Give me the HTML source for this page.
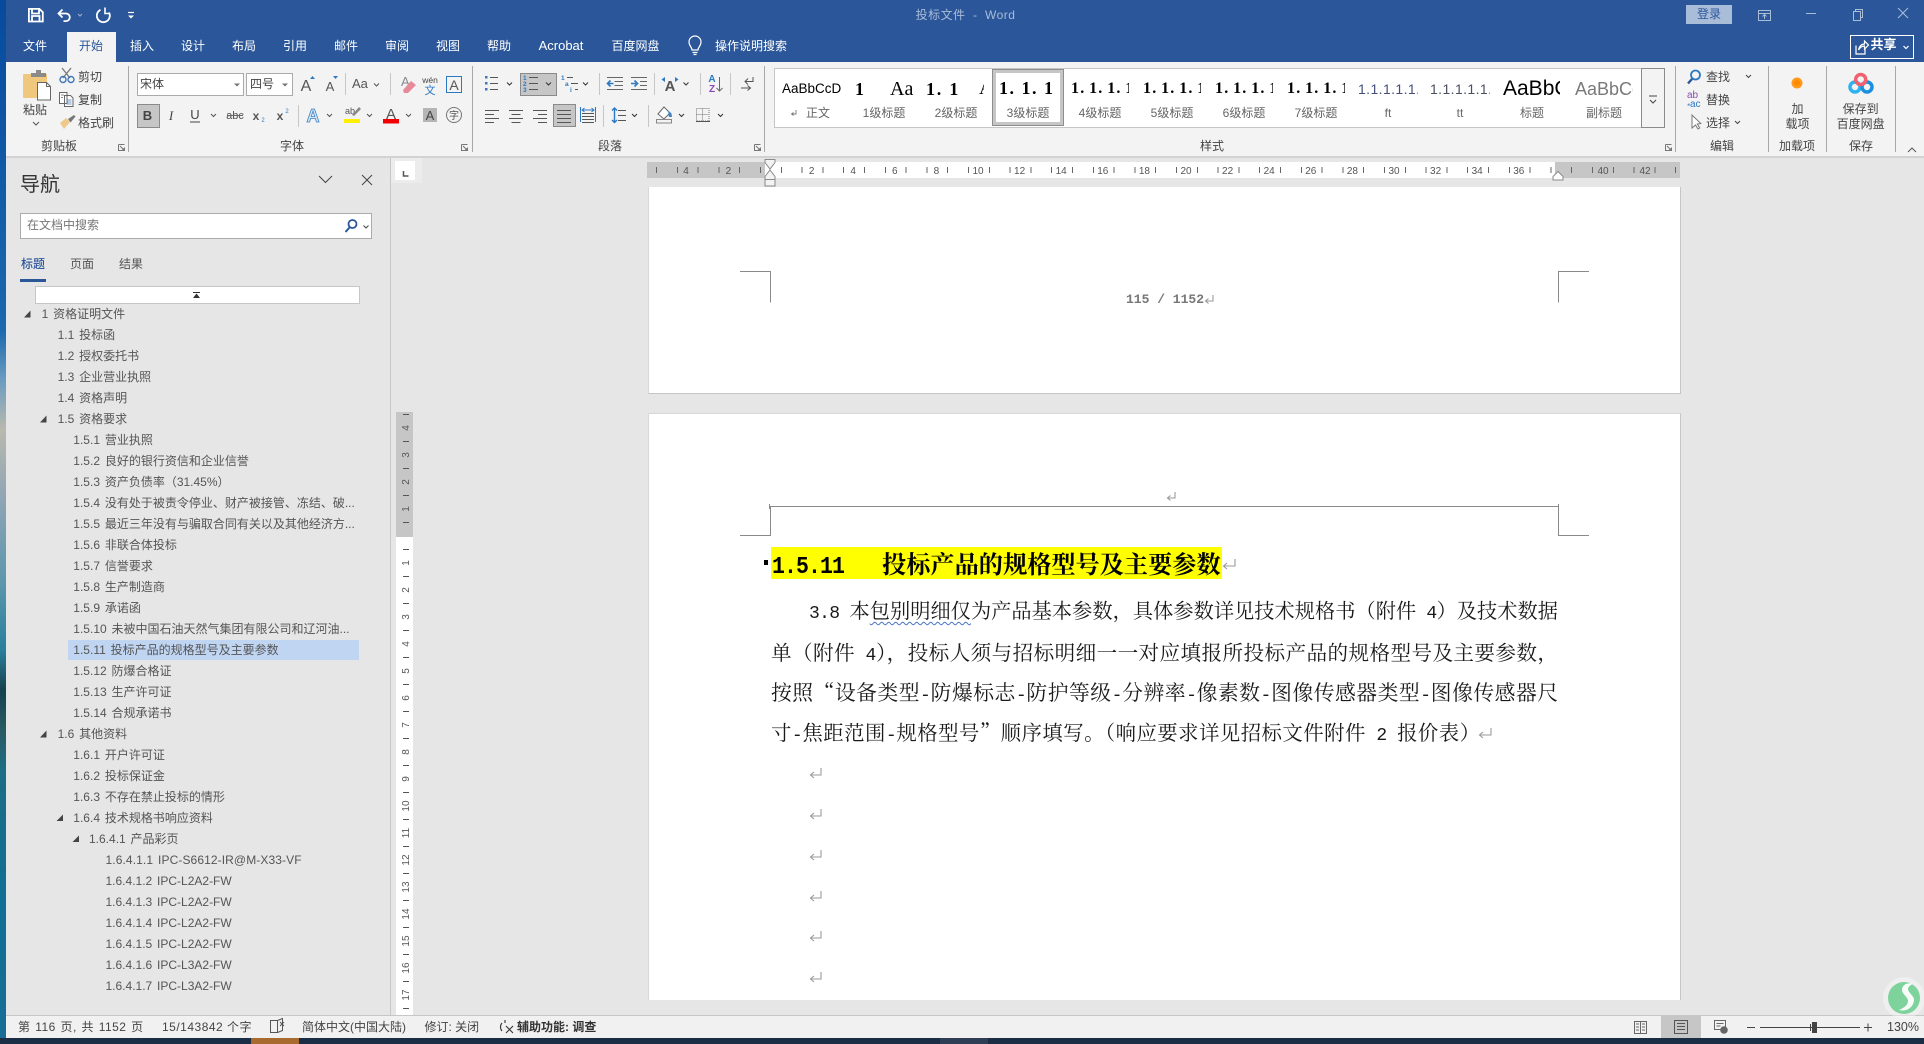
<!DOCTYPE html>
<html lang="zh-CN"><head><meta charset="utf-8"><title>投标文件 - Word</title>
<style>
html,body{margin:0;padding:0;width:1924px;height:1044px;overflow:hidden;background:#e6e6e6}
body{position:relative;font-family:"Liberation Sans","Noto Sans CJK SC",sans-serif;font-size:12px;color:#444}
.b{position:absolute}
.t{position:absolute;white-space:nowrap;line-height:20px;height:20px}
.c{transform:translateX(-50%)}
.tab{position:absolute;top:36px;line-height:20px;color:#fff;transform:translateX(-50%);white-space:nowrap}
.lb{position:absolute;top:136px;line-height:20px;color:#444;transform:translateX(-50%);white-space:nowrap}
.sl{position:absolute;top:103px;line-height:20px;color:#666;transform:translateX(-50%);white-space:nowrap}
.sp{position:absolute;overflow:hidden;white-space:nowrap;height:24px;line-height:24px;top:77px;color:#000;font-family:"Liberation Serif","Noto Serif CJK SC",serif}
#tree{position:absolute;left:6px;top:304px;width:384px;color:#555;font-size:12px;word-spacing:1.5px}
#tree div{height:21px;line-height:21px;white-space:nowrap}
.l1{padding-left:35.6px}.l2{padding-left:51.6px}.l3{padding-left:67.3px}.l4{padding-left:83px}.l5{padding-left:99.5px}
.body{position:absolute;font-family:"Noto Serif CJK SC",serif;color:#1a1a1a;height:30px;line-height:30px;font-size:20.6px;text-align:justify;text-align-last:justify;overflow:visible}
.m{font-family:"Liberation Mono",monospace;font-size:18px;letter-spacing:-.7px}
.st{position:absolute;top:1017px;line-height:20px;color:#444;white-space:nowrap;font-size:12px}
</style></head><body>
<div class="b" style="left:0;top:0;width:6px;height:1044px;background:linear-gradient(180deg,#084a9c 0,#0f58a6 150px,#1a68ae 330px,#6a9cc0 380px,#b8b9ae 430px,#8fa4b5 500px,#5d97ad 580px,#2a7f9c 650px,#16414f 690px,#2a5a63 730px,#1d6d85 770px,#0f6f94 900px,#186d95 1030px)"></div>
<div class="b" style="left:6px;top:0;width:1918px;height:62px;background:#2b579a"></div>
<div class="b" style="left:67px;top:32px;width:49px;height:30px;background:#f3f3f3"></div>
<div class="b" style="left:6px;top:62px;width:1918px;height:94px;background:#f3f3f3"></div>
<div class="b" style="left:6px;top:156px;width:1918px;height:2px;background:#d2d2d2"></div>

<div class="t c" style="left:965.500px;top:5px;color:#a9bcd8;letter-spacing:.45px">投标文件&nbsp; -&nbsp; Word</div>
<div class="b" style="left:1686px;top:5px;width:46px;height:19px;background:#a9bcd8;color:#2b579a;text-align:center;line-height:19px">登录</div>

<span class="tab" style="left:35px">文件</span><span class="tab" style="left:91px;color:#2b579a">开始</span><span class="tab" style="left:142px">插入</span><span class="tab" style="left:193px">设计</span><span class="tab" style="left:244px">布局</span><span class="tab" style="left:295px">引用</span><span class="tab" style="left:346px">邮件</span><span class="tab" style="left:397px">审阅</span><span class="tab" style="left:448px">视图</span><span class="tab" style="left:499px">帮助</span><span class="tab" style="left:561px;font-size:13px">Acrobat</span><span class="tab" style="left:635.500px">百度网盘</span><span class="tab" style="left:751px">操作说明搜索</span>
<div class="b" style="left:1850px;top:35px;width:62px;height:22px;border:1px solid #fff"></div>
<div class="t" style="left:1870.500px;top:35px;color:#fff;font-weight:700;font-size:13px">共享</div>

<!-- ribbon text -->
<div class="t c" style="left:35px;top:100px">粘贴</div>
<div class="t" style="left:78px;top:67px">剪切</div><div class="t" style="left:78px;top:90px">复制</div><div class="t" style="left:78px;top:113px">格式刷</div>
<span class="lb" style="left:59px">剪贴板</span><span class="lb" style="left:292px">字体</span><span class="lb" style="left:610px">段落</span><span class="lb" style="left:1212px">样式</span><span class="lb" style="left:1722px">编辑</span><span class="lb" style="left:1797px">加载项</span><span class="lb" style="left:1861px">保存</span>
<div class="b" style="left:137px;top:73px;width:105px;height:21px;background:#fff;border:1px solid #ababab;line-height:21px;text-indent:2px">宋体</div>
<div class="b" style="left:246px;top:73px;width:45px;height:21px;background:#fff;border:1px solid #ababab;line-height:21px;text-indent:3px">四号</div>
<div class="t" style="left:352px;top:74px;font-size:13px;color:#555">Aa</div>
<div class="b" style="left:137px;top:104px;width:21px;height:22px;background:#c6c6c6;border:1px solid #8a8a8a"></div>
<div class="b" style="left:520px;top:73px;width:35px;height:21px;background:#c6c6c6;border:1px solid #8a8a8a"></div>
<div class="b" style="left:553px;top:104px;width:21px;height:21px;background:#c6c6c6;border:1px solid #8a8a8a"></div>

<!-- style gallery -->
<div class="b" style="left:774px;top:68px;width:866px;height:58px;background:#fff;border:1px solid #c6c6c6"></div>
<div class="b" style="left:1641px;top:68px;width:22px;height:58px;background:#f3f3f3;border:1px solid #8a8a8a"></div>
<div class="b" style="left:992px;top:69px;width:70px;height:55px;border:1px solid #8e8e8e;box-shadow:inset 0 0 0 3px #c6c6c6;background:#fff"></div>
<div class="sp" style="left:782px;width:60px;font:13.500px/24px 'Liberation Sans',sans-serif">AaBbCcD</div>
<div class="sp" style="left:855px;width:10px;font-size:18px;font-weight:700">1</div>
<div class="sp" style="left:890px;width:26px;font-size:20px">Aa</div>
<div class="sp" style="left:926px;width:36px;font-size:18px;font-weight:700;letter-spacing:1.800px">1. 1</div>
<div class="sp" style="left:979px;width:5px;font-size:19px">A</div>
<div class="sp" style="left:999px;top:76px;width:56px;font-size:18px;font-weight:700;letter-spacing:1.500px">1. 1. 1</div>
<div class="sp" style="left:1071px;width:58px;font-size:16px;font-weight:700;letter-spacing:1.200px;word-spacing:-1.500px">1. 1. 1. 1</div>
<div class="sp" style="left:1143px;width:58px;font-size:16px;font-weight:700;letter-spacing:1.200px;word-spacing:-1.500px">1. 1. 1. 1</div>
<div class="sp" style="left:1215px;width:58px;font-size:16px;font-weight:700;letter-spacing:1.200px;word-spacing:-1.500px">1. 1. 1. 1</div>
<div class="sp" style="left:1287px;width:58px;font-size:16px;font-weight:700;letter-spacing:1.200px;word-spacing:-1.500px">1. 1. 1. 1</div>
<div class="sp" style="left:1358px;width:60px;font:14px/24px 'Liberation Sans',sans-serif;color:#44507a;letter-spacing:.4px">1.1.1.1.1.</div>
<div class="sp" style="left:1430px;width:60px;font:14px/24px 'Liberation Sans',sans-serif;color:#4a5060;letter-spacing:.4px">1.1.1.1.1.</div>
<div class="sp" style="left:1503px;width:57px;font:21px/24px 'Liberation Sans',sans-serif">AaBbC</div>
<div class="sp" style="left:1575px;width:58px;font:18px/24px 'Liberation Sans',sans-serif;color:#7a7a7a">AaBbCc</div>
<span class="sl" style="left:818px">正文</span><span class="sl" style="left:884px">1级标题</span><span class="sl" style="left:956px">2级标题</span><span class="sl" style="left:1028px">3级标题</span><span class="sl" style="left:1100px">4级标题</span><span class="sl" style="left:1172px">5级标题</span><span class="sl" style="left:1244px">6级标题</span><span class="sl" style="left:1316px">7级标题</span><span class="sl" style="left:1388px">ft</span><span class="sl" style="left:1460px">tt</span><span class="sl" style="left:1532px">标题</span><span class="sl" style="left:1604px">副标题</span>

<div class="t" style="left:1706px;top:67px">查找</div><div class="t" style="left:1706px;top:90px">替换</div><div class="t" style="left:1706px;top:113px">选择</div>
<div class="t c" style="left:1797.500px;top:99px">加</div><div class="t c" style="left:1797.500px;top:114px">载项</div>
<div class="t c" style="left:1860.700px;top:99px">保存到</div><div class="t c" style="left:1860.700px;top:114px">百度网盘</div>

<!-- nav pane -->
<div class="b" style="left:390px;top:158px;width:1px;height:858px;background:#c6c6c6"></div>
<div class="t" style="left:20px;top:172px;height:26px;line-height:26px;font-size:20px;color:#333">导航</div>
<div class="b" style="left:20px;top:213px;width:350px;height:24px;background:#fff;border:1px solid #ababab"></div>
<div class="t" style="left:27px;top:215px;color:#777">在文档中搜索</div>
<div class="t" style="left:21px;top:254px;color:#2b579a;font-weight:500">标题</div><div class="t" style="left:70px;top:254px;color:#555">页面</div><div class="t" style="left:119px;top:254px;color:#555">结果</div>
<div class="b" style="left:20px;top:279px;width:26px;height:3px;background:#2b579a"></div>
<div class="b" style="left:35px;top:286px;width:323px;height:16px;background:#fff;border:1px solid #c6c6c6"></div>
<div class="b" style="left:68px;top:640px;width:291px;height:20px;background:#c0d5f2"></div>
<div id="tree">
<div class="l1">1 资格证明文件</div>
<div class="l2">1.1 投标函</div>
<div class="l2">1.2 授权委托书</div>
<div class="l2">1.3 企业营业执照</div>
<div class="l2">1.4 资格声明</div>
<div class="l2">1.5 资格要求</div>
<div class="l3">1.5.1 营业执照</div>
<div class="l3">1.5.2 良好的银行资信和企业信誉</div>
<div class="l3">1.5.3 资产负债率（31.45%）</div>
<div class="l3">1.5.4 没有处于被责令停业、财产被接管、冻结、破...</div>
<div class="l3">1.5.5 最近三年没有与骗取合同有关以及其他经济方...</div>
<div class="l3">1.5.6 非联合体投标</div>
<div class="l3">1.5.7 信誉要求</div>
<div class="l3">1.5.8 生产制造商</div>
<div class="l3">1.5.9 承诺函</div>
<div class="l3">1.5.10 未被中国石油天然气集团有限公司和辽河油...</div>
<div class="l3">1.5.11 投标产品的规格型号及主要参数</div>
<div class="l3">1.5.12 防爆合格证</div>
<div class="l3">1.5.13 生产许可证</div>
<div class="l3">1.5.14 合规承诺书</div>
<div class="l2">1.6 其他资料</div>
<div class="l3">1.6.1 开户许可证</div>
<div class="l3">1.6.2 投标保证金</div>
<div class="l3">1.6.3 不存在禁止投标的情形</div>
<div class="l3">1.6.4 技术规格书响应资料</div>
<div class="l4">1.6.4.1 产品彩页</div>
<div class="l5" style="letter-spacing:.1px">1.6.4.1.1 IPC-S6612-IR@M-X33-VF</div>
<div class="l5">1.6.4.1.2 IPC-L2A2-FW</div>
<div class="l5">1.6.4.1.3 IPC-L2A2-FW</div>
<div class="l5">1.6.4.1.4 IPC-L2A2-FW</div>
<div class="l5">1.6.4.1.5 IPC-L2A2-FW</div>
<div class="l5">1.6.4.1.6 IPC-L3A2-FW</div>
<div class="l5">1.6.4.1.7 IPC-L3A2-FW</div>
</div>

<!-- rulers -->
<div class="b" style="left:391px;top:158px;width:31px;height:25px;background:#ececec"></div>
<div class="b" style="left:395px;top:161px;width:20px;height:19px;background:#fff"></div>
<div class="b" style="left:647px;top:162px;width:1033px;height:16px;background:#c6c6c6"></div>
<div class="b" style="left:765px;top:162px;width:790px;height:16px;background:#fff"></div>
<div class="b" style="left:647px;top:167px;width:1033px;height:6px;background:repeating-linear-gradient(90deg,#666 0,#666 1px,transparent 1px,transparent 20.8px);background-position:9px 0"></div>
<div class="b" style="left:396px;top:412px;width:17px;height:125px;background:#c6c6c6"></div>
<div class="b" style="left:396px;top:537px;width:17px;height:479px;background:#fff"></div>
<div class="b" style="left:403px;top:414px;width:6px;height:600px;background:repeating-linear-gradient(180deg,#555 0,#555 1px,transparent 1px,transparent 27px)"></div>

<!-- pages -->
<div class="b" style="left:648px;top:187px;width:1031px;height:206px;background:#fff;border-right:1px solid #c6c6c6;border-bottom:1px solid #c6c6c6;border-left:1px solid #d8d8d8"></div>
<div class="b" style="left:648px;top:413px;width:1031px;height:586px;background:#fff;border-right:1px solid #c6c6c6;border-left:1px solid #d8d8d8;border-top:1px solid #d8d8d8"></div>
<div class="t" style="left:1126px;top:290px;font-family:'Liberation Mono',monospace;font-weight:700;color:#777;font-size:13px">115 / 1152</div>
<div class="b" style="left:771px;top:547px;width:451px;height:32px;background:#ff0;line-height:31px;font-family:'Noto Serif CJK SC',serif;font-weight:700;font-size:24.200px;color:#000;white-space:nowrap"><span style="display:inline-block;width:111px;padding-left:1px;box-sizing:border-box"><span style="display:inline-block;font-family:'Liberation Mono',monospace;font-size:21.500px;letter-spacing:-.9px;transform:scaleY(1.120);transform-origin:50% 60%">1.5.11</span></span>投标产品的规格型号及主要参数</div>
<div class="b" style="left:764px;top:560px;width:4px;height:5px;background:#000"></div>
<div class="body" style="left:809px;top:595px;width:749px;font-size:20.200px"><span class="m">3.8 </span>本<span style="text-decoration:underline wavy #4472c4 1px;text-underline-offset:3px">包别明细仅</span>为产品基本参数，具体参数详见技术规格书（附件<span class="m"> 4</span>）及技术数据</div>
<div class="body" style="left:771px;top:636px;width:787px"><span>单（附件</span><span class="m"> 4</span>），投标人须与招标明细一一对应填报所投标产品的规格型号及主要参数，</div>
<div class="body" style="left:771px;top:676px;width:787px;font-size:20.800px">按照“设备类型<span class="m">-</span>防爆标志<span class="m">-</span>防护等级<span class="m">-</span>分辨率<span class="m">-</span>像素数<span class="m">-</span>图像传感器类型<span class="m">-</span>图像传感器尺</div>
<div class="body" style="left:771px;top:717px;width:709px;font-size:20.400px">寸<span class="m">-</span>焦距范围<span class="m">-</span>规格型号”顺序填写。（响应要求详见招标文件附件<span class="m"> 2 </span>报价表）</div>

<!-- status bar -->
<div class="b" style="left:6px;top:1015px;width:1918px;height:1px;background:#c6c6c6"></div>
<div class="b" style="left:6px;top:1016px;width:1918px;height:22px;background:#f1f1f1"></div>
<div class="b" style="left:0;top:1038px;width:1924px;height:6px;background:#1b2d45"></div>
<div class="b" style="left:251px;top:1038px;width:48px;height:6px;background:#a96a30"></div>
<div class="b" style="left:940px;top:1038px;width:48px;height:6px;background:#2e3f55"></div>
<div class="b" style="left:1661px;top:1016px;width:40px;height:22px;background:#c6c6c6"></div>
<span class="st" style="left:18px;letter-spacing:.45px;word-spacing:1px">第 116 页, 共 1152 页</span><span class="st" style="left:162px;letter-spacing:.5px">15/143842 个字</span><span class="st" style="left:302px">简体中文(中国大陆)</span><span class="st" style="left:424.500px">修订: 关闭</span><span class="st" style="left:517px;font-weight:700;color:#333">辅助功能: 调查</span><span class="st" style="left:1887px;color:#444;font-size:12.500px">130%</span>

<svg class="b" style="left:0;top:0" width="1924" height="1044" viewBox="0 0 1924 1044" fill="none" font-family="Liberation Sans, Noto Sans CJK SC, sans-serif">
<!-- QAT -->
<g stroke="#fff" stroke-width="1.800">
<path d="M28.900 8.900h10.500l3.400 3.400v9.200H28.900z"/><path d="M32 9v4.500h7V9M32 21.500v-5.500h7.500v5.500"/>
<path d="M59 13.500h7a3.800 3.800 0 0 1 0 7.600h-2.500"/><path d="M62.500 9.500l-4 4 4 4"/>
<path d="M100.500 9.800A6.500 6.500 0 1 0 109 12.500"/><path d="M105 7.500v6h5" stroke-width="1.600"/>
<path d="M128 12.500h6" stroke-width="1.200"/></g>
<path d="M128 15.500h6l-3 3z" fill="#fff"/><path d="M78 14l2 2 2-2" stroke="#9fb3d1"/>
<!-- window controls -->
<g stroke="#a9bcd8" stroke-width="1"><path d="M1758.500 10.500h12v10h-12zM1758.500 13.500h12M1764.500 19v-4.500M1762.500 16.500l2-2 2 2"/><path d="M1806 13.500h10"/><path d="M1853.500 11.500h7v9h-7zM1855.500 11.500v-2h7v8h-2"/><path d="M1898 8l10 10M1908 8l-10 10"/></g>
<!-- bulb -->
<g stroke="#fff" stroke-width="1.200"><path d="M692 50c0-3-3-4-3-8a6 6 0 0 1 12 0c0 4-3 5-3 8z"/><path d="M692.500 52.500h5M693.500 54.500h3"/></g>
<!-- share -->
<g stroke="#fff" stroke-width="1.200"><path d="M1856 45.500v8.500h9v-5"/><path d="M1858.500 50c1-4 3-6 6-6v-3l4 4-4 4v-3c-2.500 0-4.500 1.500-6 4z"/></g><path d="M1903.500 46l2.500 2.500 2.500-2.500" stroke="#fff" stroke-width="1.200"/>
<!-- separators -->
<path d="M128.500 66v86M472.500 66v86M764.500 66v86M1675.500 66v86M1768.500 66v86M1826.500 66v86M1895.500 66v86" stroke="#a8a8a8"/>
<path d="M345.500 73v22M390.500 73v22M298.500 105v22M599.500 73v22M654.500 73v22M700.500 73v22M730.500 73v22M603.500 105v22M648.500 105v22" stroke="#c6c6c6"/>
<!-- clipboard -->
<rect x="23" y="74" width="24" height="24" rx="1" fill="#efc77d"/><rect x="31" y="73" width="15" height="4" fill="#8a8a8a"/><rect x="36" y="70" width="5" height="4" fill="#8a8a8a"/>
<path d="M37.500 82.500h9l4 4v13.500h-13z" fill="#fff" stroke="#666"/><path d="M46.500 82.500v4h4" stroke="#666"/>
<path d="M33 122l3 3 3-3" stroke="#555"/>
<!-- scissors -->
<path d="M62 68l8 10M71 68l-8 10" stroke="#777" stroke-width="1.300"/><circle cx="63" cy="79.500" r="3" stroke="#3f78b8" stroke-width="1.400"/><circle cx="71" cy="79.500" r="3" stroke="#3f78b8" stroke-width="1.400"/>
<!-- copy -->
<path d="M59.500 92.500h7.500v11h-7.500zM64.500 95.500h6l2.500 2.500v8.500h-8.500z" fill="#fff" stroke="#666"/><path d="M66.500 100h5M66.500 102h5M66.500 104h5" stroke="#3f78b8" stroke-width=".8"/><path d="M61 95h3M61 97.500h2" stroke="#666" stroke-width=".8"/>
<!-- brush -->
<path d="M60 123l6-5 4 4-6 7z" fill="#eec98a"/><path d="M68 119l6-4 1.500 1.500-5 6z" fill="#777"/>
<!-- combo arrows -->
<path d="M234 83.500h6l-3 3z M282 83.500h6l-3 3z" fill="#777"/>
<!-- font row 1 -->
<text x="306" y="91" text-anchor="middle" font-size="16" fill="#555">A</text><path d="M310 79h5l-2.500-3z" fill="#2b79c2"/>
<text x="330" y="91" text-anchor="middle" font-size="13" fill="#555">A</text><path d="M333 76h5l-2.500 3z" fill="#2b79c2"/>
<path d="M374 83.500l2.500 2.500 2.500-2.500" stroke="#555"/>
<text x="401" y="86" font-size="13" fill="#888">A</text><path d="M403 90l8-9 5 4-8 8h-4z" fill="#e8899a"/>
<text x="430" y="83" text-anchor="middle" font-size="8.500" fill="#444">wén</text><text x="430" y="94" text-anchor="middle" font-size="11" fill="#2b79c2">文</text>
<rect x="446.500" y="76.500" width="15" height="16" stroke="#2b79c2"/><text x="454" y="90" text-anchor="middle" font-size="14" fill="#555">A</text>
<!-- font row 2 -->
<text x="147.500" y="120" text-anchor="middle" font-size="13" font-weight="700" fill="#444">B</text>
<text x="171" y="120" text-anchor="middle" font-size="13" font-style="italic" font-family="Liberation Serif,serif" fill="#444">I</text>
<text x="195" y="119" text-anchor="middle" font-size="13" fill="#444">U</text><path d="M190 122h10" stroke="#444"/>
<path d="M211 114l2.500 2.500 2.500-2.500M327 114l2.500 2.500 2.500-2.500M367 114l2.500 2.500 2.500-2.500M406 114l2.500 2.500 2.500-2.500" stroke="#555"/>
<text x="235" y="119" text-anchor="middle" font-size="11" fill="#555">abc</text><path d="M227 115.500h16" stroke="#666"/>
<text x="256" y="120" text-anchor="middle" font-size="12" font-weight="700" fill="#555">x</text><text x="263" y="122" text-anchor="middle" font-size="6" fill="#2b79c2">2</text>
<text x="280" y="120" text-anchor="middle" font-size="12" font-weight="700" fill="#555">x</text><text x="287" y="113" text-anchor="middle" font-size="6" fill="#2b79c2">2</text>
<text x="313" y="122" text-anchor="middle" font-size="18" font-weight="700" fill="#d5e6f7" stroke="#3f84c7" stroke-width=".8">A</text>
<text x="350" y="114" text-anchor="middle" font-size="9" fill="#555">ab</text><path d="M352 115l7-8 2 2-7 7z" fill="#8a8a8a"/><rect x="344" y="119" width="16" height="4" fill="#ffef00"/>
<text x="391" y="119" text-anchor="middle" font-size="15" fill="#555">A</text><rect x="383" y="119" width="16" height="4.500" fill="#f00000"/>
<rect x="423" y="108" width="14" height="14" fill="#b5b5b5"/><text x="430" y="120" text-anchor="middle" font-size="13" fill="#444">A</text>
<circle cx="454" cy="115" r="7.500" stroke="#777"/><text x="454" y="119" text-anchor="middle" font-size="10" fill="#555">字</text>
<!-- paragraph row 1 -->
<g fill="#3f78b8"><rect x="485" y="76" width="2.500" height="2.500"/><rect x="485" y="82" width="2.500" height="2.500"/><rect x="485" y="88" width="2.500" height="2.500"/></g>
<path d="M490 77.500h8M490 83.500h8M490 89.500h8M529 77.500h9M529 83.500h9M529 89.500h9M567 77.500h6M571 83.500h7M575 89.500h3" stroke="#555"/>
<path d="M607 77.500h16M614.500 81.500h8.500M614.500 85.500h8.500M607 89.500h16M631 77.500h16M640 81.500h7M640 85.500h7M631 89.500h16" stroke="#666"/>
<g font-size="6.500" font-weight="700" fill="#2b79c2"><text x="523" y="80">1</text><text x="523" y="86">2</text><text x="523" y="92">3</text><text x="561" y="80">1</text><text x="565" y="86">a</text><text x="570" y="92">i</text></g>
<path d="M507 82.500l2.500 2.500 2.500-2.500M546 82.500l2.500 2.500 2.500-2.500M583 82.500l2.500 2.500 2.500-2.500M683.500 82.500l2.500 2.500 2.500-2.500" stroke="#333"/>
<path d="M613.500 83.500h-5M610.500 80.500l-3 3 3 3M631 83.500h5M634.500 80.500l3 3-3 3" stroke="#2b79c2" stroke-width="1.600"/>
<text x="670" y="91" text-anchor="middle" font-size="15" font-weight="700" fill="#555">A</text><path d="M665 77l-3.500 2.500 3.500 2.500zM675 77l3.500 2.500-3.500 2.500z" fill="#2b79c2"/>
<text x="712" y="82" text-anchor="middle" font-size="10" font-weight="700" fill="#2b79c2">A</text><text x="712" y="92" text-anchor="middle" font-size="10" font-weight="700" fill="#8a4bb0">Z</text><path d="M719.500 77v14M716.500 88l3 3 3-3" stroke="#666"/>
<path d="M753 77v4.500h-8M748 78.500l-3 3 3 3M741 88h9M747.500 85.500l3 2.500-3 2.500" stroke="#555"/>
<!-- paragraph row 2 -->
<path d="M485 110.500h14M485 114.500h9M485 118.500h14M485 122.500h9M509 110.500h14M511.500 114.500h9M509 118.500h14M511.500 122.500h9M533 110.500h14M538 114.500h9M533 118.500h14M538 122.500h9M557 110.500h14M557 114.500h14M557 118.500h14M557 122.500h14M582 113.500h12M582 116.500h12M582 119.500h12M582 122.500h12" stroke="#555"/>
<path d="M580.500 107v15M595.500 107v15M582 110h12M584.500 108l-2.500 2 2.500 2M591.500 108l2.500 2-2.500 2" stroke="#2b79c2"/>
<path d="M614.500 108v14.500M612 110.500l2.500-2.500 2.500 2.500M612 120l2.500 2.500 2.500-2.500" stroke="#2b79c2" stroke-width="1.400"/><path d="M618 110.500h8M618 115.500h8M618 120.500h8" stroke="#555"/>
<path d="M632 114l2.500 2.500 2.500-2.500M679 114l2.500 2.500 2.500-2.500M718 114l2.500 2.500 2.500-2.500" stroke="#333"/>
<path d="M664 107l-6 7 6 5 6-6z" fill="#fff" stroke="#666"/><path d="M668 110.500l3.500 3 .5 3.500h-3z" fill="#3f84c7"/><rect x="656.500" y="119.500" width="15" height="3.500" fill="#f3f3f3" stroke="#888"/>
<path d="M696.500 108.500h12.500v12.500h-12.500zM702.500 108.500v12.500M696.500 114.500h12.500" stroke="#777" stroke-dasharray="1 1"/><path d="M696 121.500h14" stroke="#555"/>
<!-- gallery -->
<path d="M1649 96h8M1650 100l3 3 3-3" stroke="#444"/><path d="M796 110v4h-4M793.500 112.500l-2 1.500 2 1.500" stroke="#777" stroke-width=".9"/>
<!-- launchers -->
<g stroke="#777"><path d="M118.500 144.500h6M118.500 144.500v6h6v-3M120 146l4 4M122 150h2v-2"/><path d="M461.500 144.500h6M461.500 144.500v6h6v-3M463 146l4 4M465 150h2v-2"/><path d="M754.500 144.500h6M754.500 144.500v6h6v-3M756 146l4 4M758 150h2v-2"/><path d="M1665.500 144.500h6M1665.500 144.500v6h6v-3M1667 146l4 4M1669 150h2v-2"/></g>
<!-- edit group -->
<circle cx="1695.500" cy="75" r="4.500" stroke="#2b79c2" stroke-width="1.800"/><path d="M1692 79l-4 4.500" stroke="#2b579a" stroke-width="2.400"/>
<path d="M1746 75l2.500 2.500 2.500-2.500M1735 121l2.500 2.500 2.500-2.500" stroke="#444"/>
<text x="1687" y="98" font-size="10" fill="#8a4bb0">ab</text><text x="1690" y="107" font-size="10" fill="#2b79c2">ac</text><path d="M1689 103.500v1.500h-1.500" stroke="#2b79c2"/>
<path d="M1692 115v13l3.500-3 2.500 4 1.800-1-2.500-4 3.500-.5z" stroke="#777" fill="#fff"/>
<circle cx="1797" cy="83" r="5.500" fill="#ff9a1a"/><circle cx="1797" cy="83" r="3" fill="#ff8a00"/>
<circle cx="1855" cy="87" r="5" stroke="#2bb3f0" stroke-width="3.500"/><circle cx="1867" cy="87" r="5" stroke="#1a8fe0" stroke-width="3.500"/><circle cx="1860.700" cy="79.500" r="5" stroke="#f0626e" stroke-width="3.500"/>
<path d="M1908 152l4-4 4 4" stroke="#555"/>
<!-- nav -->
<path d="M319 176l6.500 6.500 6.500-6.500M362 175l10 10M372 175l-10 10" stroke="#444"/>
<circle cx="352.500" cy="224" r="4" stroke="#2b579a" stroke-width="1.800"/><path d="M349.500 227.500l-4 4.500" stroke="#2b579a" stroke-width="2"/><path d="M363.500 225.500l2.500 2.500 2.500-2.500" stroke="#444"/>
<rect x="193" y="292" width="7" height="1" fill="#333"/><path d="M193 298h7l-3.500-4.500z" fill="#333"/>
<path d="M30.500 310.500v7h-6.500zM46.500 415.500v7h-6.500zM46.500 730.500v7h-6.500zM63 814.500v6.500h-6.500zM79 835.500v6.500h-6.500z" fill="#444"/>
<!-- ruler corner -->
<path d="M403.500 171v5h5" stroke="#555" stroke-width="1.500"/>
<!-- h ruler numbers -->
<g font-size="10" fill="#555" text-anchor="middle"><text x="686" y="174">4</text><text x="728.400" y="174">2</text><text x="811.600" y="174">2</text><text x="853.200" y="174">4</text><text x="894.800" y="174">6</text><text x="936.400" y="174">8</text><text x="978" y="174">10</text><text x="1019.600" y="174">12</text><text x="1061.200" y="174">14</text><text x="1102.800" y="174">16</text><text x="1144.400" y="174">18</text><text x="1186" y="174">20</text><text x="1227.600" y="174">22</text><text x="1269.200" y="174">24</text><text x="1310.800" y="174">26</text><text x="1352.400" y="174">28</text><text x="1394" y="174">30</text><text x="1435.600" y="174">32</text><text x="1477.200" y="174">34</text><text x="1518.800" y="174">36</text><text x="1603" y="174">40</text><text x="1645" y="174">42</text></g>
<!-- indent markers -->
<path d="M765 159.500h10v3l-5 6.500-5-6.500zM765 179.500v-3l5-6.500 5 6.500v3zM765 179.500h10v6.500h-10z" fill="#f3f3f3" stroke="#8a8a8a"/>
<path d="M1553 180v-3.500l5-5 5 5v3.500z" fill="#fff" stroke="#8a8a8a"/>
<!-- v ruler numbers -->
<g font-size="10" fill="#555" text-anchor="middle">
<text transform="translate(409,428) rotate(-90)">4</text><text transform="translate(409,455) rotate(-90)">3</text><text transform="translate(409,482) rotate(-90)">2</text><text transform="translate(409,509) rotate(-90)">1</text><text transform="translate(409,563) rotate(-90)">1</text><text transform="translate(409,590) rotate(-90)">2</text><text transform="translate(409,617) rotate(-90)">3</text><text transform="translate(409,644) rotate(-90)">4</text><text transform="translate(409,671) rotate(-90)">5</text><text transform="translate(409,698) rotate(-90)">6</text><text transform="translate(409,725) rotate(-90)">7</text><text transform="translate(409,752) rotate(-90)">8</text><text transform="translate(409,779) rotate(-90)">9</text><text transform="translate(409,806) rotate(-90)">10</text><text transform="translate(409,833) rotate(-90)">11</text><text transform="translate(409,860) rotate(-90)">12</text><text transform="translate(409,887) rotate(-90)">13</text><text transform="translate(409,914) rotate(-90)">14</text><text transform="translate(409,941) rotate(-90)">15</text><text transform="translate(409,968) rotate(-90)">16</text><text transform="translate(409,995) rotate(-90)">17</text></g>
<!-- crop marks -->
<path d="M740 271.500h30.500v31M1589 271.500h-30.500v31M770.500 506v29.500H740M1558.500 506v29.500H1589" stroke="#8a8a8a"/>
<path d="M769 506.500h790" stroke="#8a8a8a"/><path d="M769.500 504v5M1558.500 504v5" stroke="#8a8a8a"/>
<!-- return marks -->
<g stroke="#9a9a9a" fill="none" stroke-width="1.100">
<path d="M1213 295v6h-7M1208.500 298.500l-3 2.500 3 2.500"/><path d="M1175 492v6h-7M1170.500 495.500l-3 2.500 3 2.500"/>
<path d="M1235 559v7h-11M1227 563l-3.500 3 3.500 3"/>
<path d="M1491 728v7h-11M1483 732l-3.500 3 3.500 3"/>
<path d="M821 768v7h-10M814 772l-3.500 3 3.500 3"/><path d="M821 809v7h-10M814 813l-3.500 3 3.500 3"/><path d="M821 850v7h-10M814 854l-3.500 3 3.500 3"/><path d="M821 891v7h-10M814 895l-3.500 3 3.500 3"/><path d="M821 931v7h-10M814 935l-3.500 3 3.500 3"/><path d="M821 972v7h-10M814 976l-3.500 3 3.500 3"/></g>
<!-- status icons -->
<path d="M270.500 1020.500h7v12h-7zM277.500 1020.500l5-2v12l-5 2M280 1022l4 4M284 1022l-4 4" stroke="#555"/>
<path d="M505 1020v3M502 1031a6 6 0 0 1 0-8M506 1026l7 7M513 1026l-7 7" stroke="#333" stroke-width="1.100"/>
<path d="M1634.500 1021.500h6v12h-6zM1640.500 1021.500h6v12h-6zM1636 1024h3M1636 1027h3M1636 1030h3M1642 1024h3M1642 1027h3M1642 1030h3" stroke="#666"/>
<path d="M1674.500 1020.500h13v13h-13zM1677 1023.500h8M1677 1026.500h8M1677 1029.500h8" stroke="#555"/>
<path d="M1714.500 1020.500h11v9h-11zM1716.500 1023.500h7M1716.500 1026h4" stroke="#666"/><circle cx="1724" cy="1030" r="3.800" fill="#666"/>
<path d="M1747 1027.500h8M1864 1027.500h8M1868 1023.500v8M1760 1027.500h100M1810.500 1024v7" stroke="#444"/>
<rect x="1812" y="1022" width="5" height="11" fill="#444"/>
<!-- green logo -->
<circle cx="1904" cy="998" r="21" fill="#ffffff" opacity=".35"/><circle cx="1904" cy="998" r="16" fill="#7dd39b"/>
<path d="M1913 984c-6-2-11 1-11 6 0 4 6 7 6 11 0 4-4 7-9 9 8 2 14-3 15-9 1-5-6-8-6-12 0-2 2-4 5-5z" fill="#fff" opacity=".95"/>
</svg>
</body></html>
